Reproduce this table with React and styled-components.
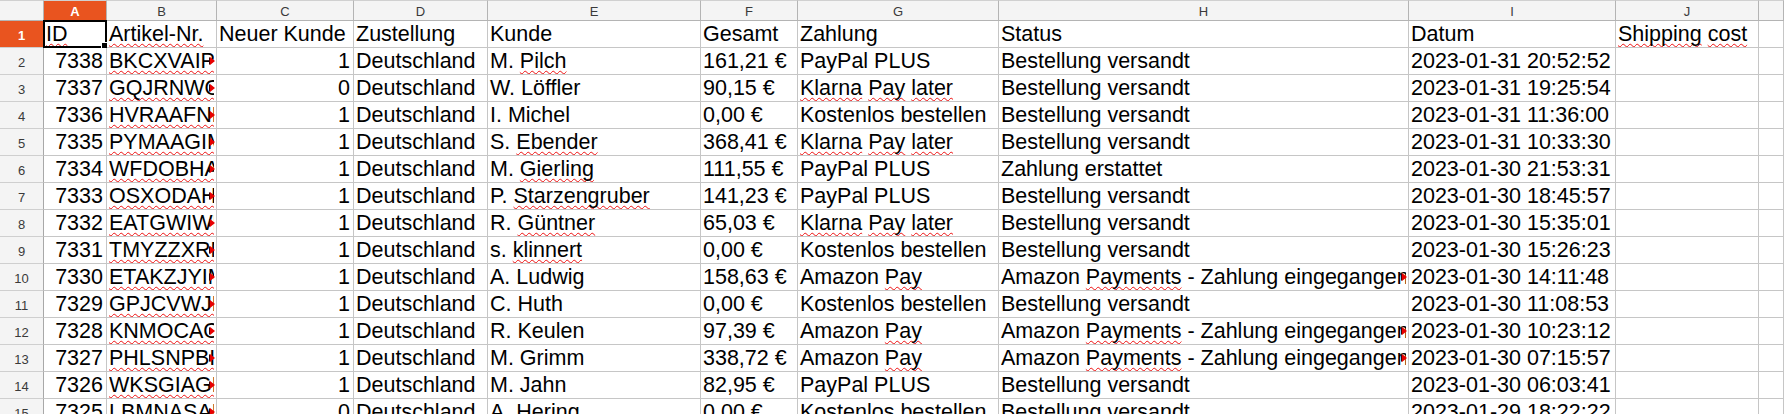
import React from "react";
import styled, { createGlobalStyle, css } from "styled-components";

const GlobalStyle = createGlobalStyle`
  html, body { margin: 0; padding: 0; background: #ffffff; overflow: hidden; }
  #root { width: 1784px; height: 414px; overflow: hidden; }
`;

const COLS = [44, 63, 110, 137, 134, 213, 97, 201, 410, 207, 143];
const LETTERS = ["A", "B", "C", "D", "E", "F", "G", "H", "I", "J", ""];

const Sheet = styled.div`
  display: grid;
  grid-template-columns: ${COLS.map((c) => `${c}px`).join(" ")} 1fr;
  grid-auto-rows: 27px;
  grid-template-rows: 21px;
  font-family: "Liberation Sans", Arial, sans-serif;
  color: #000;
`;

const HeaderBase = css`
  box-sizing: border-box;
  background: #f4f4f4;
  color: #3a3a3a;
  font-family: "Liberation Sans", Arial, sans-serif;
  font-size: 13px;
  display: flex;
  align-items: center;
  justify-content: center;
  border-right: 1px solid #b4b4b4;
  border-bottom: 1px solid #b4b4b4;
  ${(p) =>
    p.$active &&
    css`
      background: #e9541f;
      color: #ffffff;
      font-weight: bold;
    `}
`;

const ColHeader = styled.div`
  ${HeaderBase}
  border-top: 1px solid #d0d0d0;
  padding-top: 1px;
`;

const Corner = styled.div`
  ${HeaderBase}
  border-top: 1px solid #d0d0d0;
`;

const RowHeader = styled.div`
  ${HeaderBase}
  border-bottom-color: #cfcfcf;
  border-right-color: #a8a8a8;
  padding-top: 2px;
`;

const Cell = styled.div`
  box-sizing: border-box;
  position: relative;
  border-right: 1px solid #c6c6c6;
  border-bottom: 1px solid #c6c6c6;
  font-size: 21.5px;
  line-height: 26px;
  padding: 0 ${(p) => (p.$align === "right" ? "3px" : "2px")};
  text-align: ${(p) => p.$align};
  white-space: nowrap;
  overflow: ${(p) => (p.$selected ? "visible" : "hidden")};
  text-overflow: clip;
`;

const Spell = styled.span`
  text-decoration-line: underline;
  text-decoration-style: wavy;
  text-decoration-color: #ee1111;
  text-decoration-thickness: 1.3px;
  text-underline-offset: 2px;
  text-decoration-skip-ink: none;
`;

const Clip = styled.span`
  display: block;
  overflow: hidden;
  white-space: nowrap;
`;

const OverflowMark = styled.span`
  position: absolute;
  right: 1px;
  top: 50%;
  margin-top: -4px;
  width: 0;
  height: 0;
  border-top: 4px solid transparent;
  border-bottom: 4px solid transparent;
  border-left: 5px solid #e80000;
  filter: drop-shadow(-0.5px 0 0 #400);
`;

const SelectionFrame = styled.span`
  position: absolute;
  left: -1px;
  top: -1px;
  right: -1px;
  bottom: -1px;
  border: 2px solid #000;
  pointer-events: none;
`;

const Handle = styled.span`
  position: absolute;
  right: -3px;
  bottom: -3px;
  width: 5px;
  height: 5px;
  background: #000;
  border: 1px solid #fff;
`;

function Text({ value }) {
  const parts = String(value).split("~");
  return parts.map((p, i) => (i % 2 === 1 ? <Spell key={i}>{p}</Spell> : <React.Fragment key={i}>{p}</React.Fragment>));
}

const HEADER = ["~ID~", "~Artikel-Nr.~", "Neuer Kunde", "Zustellung", "Kunde", "Gesamt", "Zahlung", "Status", "Datum", "~Shipping~ ~cost~", ""];

const AMZ = "Amazon ~Payments~ - Zahlung eingegangen";

const ROWS = [
  [7338, "BKCXVAIPQZ", 1, "M. ~Pilch~", "161,21 €", "PayPal PLUS", "Bestellung versandt", "2023-01-31 20:52:52"],
  [7337, "GQJRNWOXTE", 0, "W. Löffler", "90,15 €", "~Klarna~ ~Pay~ ~later~", "Bestellung versandt", "2023-01-31 19:25:54"],
  [7336, "HVRAAFNMLK", 1, "I. Michel", "0,00 €", "Kostenlos bestellen", "Bestellung versandt", "2023-01-31 11:36:00"],
  [7335, "PYMAAGIMRD", 1, "S. ~Ebender~", "368,41 €", "~Klarna~ ~Pay~ ~later~", "Bestellung versandt", "2023-01-31 10:33:30"],
  [7334, "WFDOBHAMQE", 1, "M. ~Gierling~", "111,55 €", "PayPal PLUS", "Zahlung erstattet", "2023-01-30 21:53:31"],
  [7333, "OSXODAHMKT", 1, "P. ~Starzengruber~", "141,23 €", "PayPal PLUS", "Bestellung versandt", "2023-01-30 18:45:57"],
  [7332, "EATGWIWMRP", 1, "R. ~Güntner~", "65,03 €", "~Klarna~ ~Pay~ ~later~", "Bestellung versandt", "2023-01-30 15:35:01"],
  [7331, "TMYZZXRMWQ", 1, "s. ~klinnert~", "0,00 €", "Kostenlos bestellen", "Bestellung versandt", "2023-01-30 15:26:23"],
  [7330, "ETAKZJYIMV", 1, "A. Ludwig", "158,63 €", "Amazon ~Pay~", AMZ, "2023-01-30 14:11:48"],
  [7329, "GPJCVWJMXR", 1, "C. Huth", "0,00 €", "Kostenlos bestellen", "Bestellung versandt", "2023-01-30 11:08:53"],
  [7328, "KNMOCAOMTE", 1, "R. Keulen", "97,39 €", "Amazon ~Pay~", AMZ, "2023-01-30 10:23:12"],
  [7327, "PHLSNPBIMW", 1, "M. Grimm", "338,72 €", "Amazon ~Pay~", AMZ, "2023-01-30 07:15:57"],
  [7326, "WKSGIAGMQP", 1, "M. Jahn", "82,95 €", "PayPal PLUS", "Bestellung versandt", "2023-01-30 06:03:41"],
  [7325, "LBMNASAMYX", 0, "A. Hering", "0,00 €", "Kostenlos bestellen", "Bestellung versandt", "2023-01-29 18:22:22"],
];

export default function App() {
  return (
    <>
      <GlobalStyle />
      <Sheet>
        <Corner />
        {LETTERS.map((l, i) => (
          <ColHeader key={i} $active={l === "A"}>
            {l}
          </ColHeader>
        ))}

        <RowHeader $active>1</RowHeader>
        {HEADER.map((h, i) => (
          <Cell key={i} $align="left" $selected={i === 0}>
            <Text value={h} />
            {i === 0 && (
              <SelectionFrame>
                <Handle />
              </SelectionFrame>
            )}
          </Cell>
        ))}

        {ROWS.map((r, ri) => {
          const [id, art, neu, kunde, gesamt, zahlung, status, datum] = r;
          const statusOverflow = status === AMZ;
          return (
            <React.Fragment key={id}>
              <RowHeader>{ri + 2}</RowHeader>
              <Cell $align="right">{id}</Cell>
              <Cell $align="left">
                <Clip>
                  <Spell>{art}</Spell>
                </Clip>
                <OverflowMark />
              </Cell>
              <Cell $align="right">{neu}</Cell>
              <Cell $align="left">Deutschland</Cell>
              <Cell $align="left">
                <Text value={kunde} />
              </Cell>
              <Cell $align="left">{gesamt}</Cell>
              <Cell $align="left">
                <Text value={zahlung} />
              </Cell>
              <Cell $align="left">
                <Clip>
                  <Text value={status} />
                </Clip>
                {statusOverflow && <OverflowMark />}
              </Cell>
              <Cell $align="left">{datum}</Cell>
              <Cell $align="left" />
              <Cell $align="left" />
            </React.Fragment>
          );
        })}
      </Sheet>
    </>
  );
}
